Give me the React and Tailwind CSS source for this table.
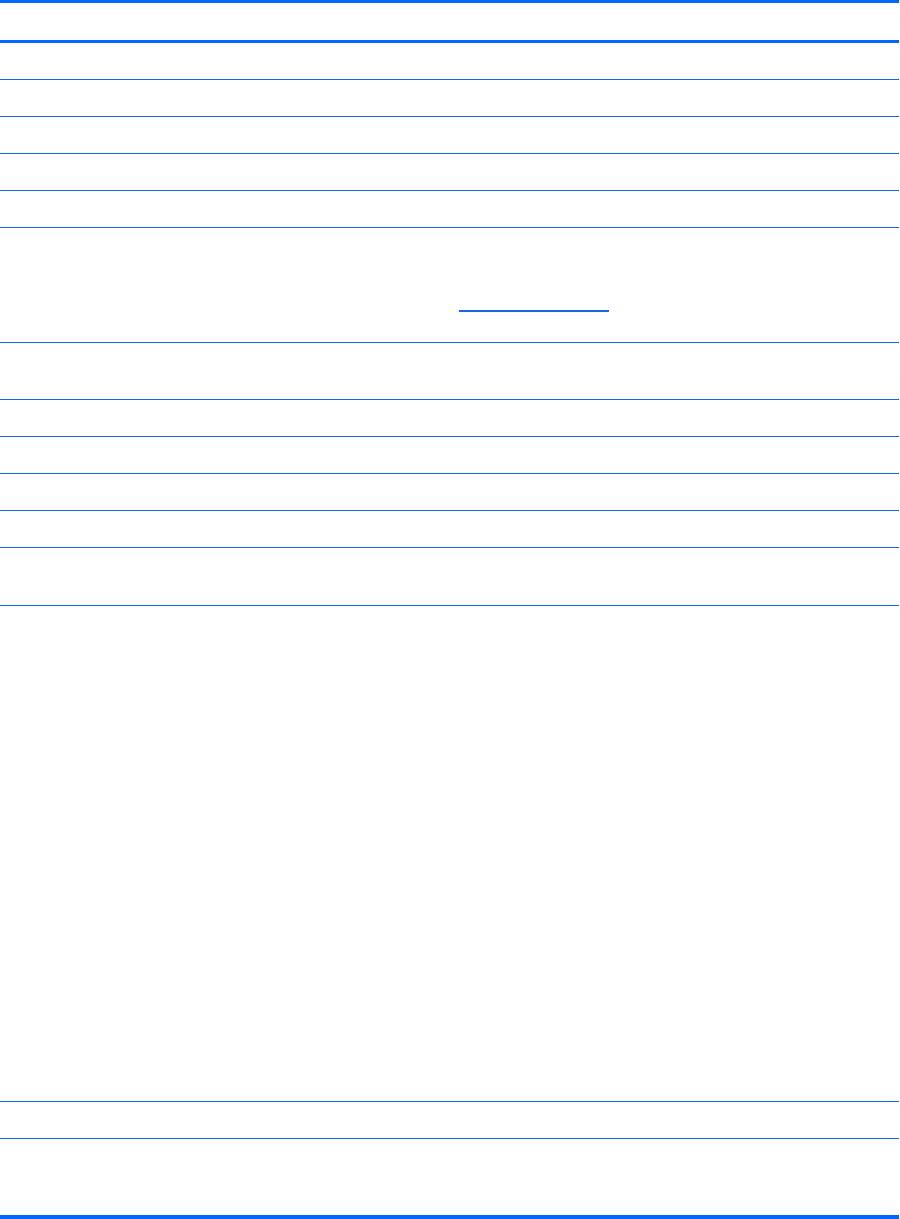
export default function App() {
  const rows = [37, 37, 37, 37, 37];
  const rows2 = [37, 37, 37, 37];
  return (
    <div className="w-[900px] h-[1219px] bg-white font-['Liberation_Sans',sans-serif]">
      <div className="w-[899px] flex flex-col">
        <div className="h-[43px] border-t-[3px] border-b-[3px] border-[#0066ff]" />
        {rows.map((h, i) => (
          <div key={i} className="h-[37px] border-b border-[#1565e8]" />
        ))}
        <div className="h-[115px] border-b border-[#1565e8] flex pl-[459px] pt-[82px]">
          <div className="w-[150px] h-[2px] bg-[#1a66e0]" />
        </div>
        <div className="h-[57px] border-b border-[#1565e8]" />
        {rows2.map((h, i) => (
          <div key={i} className="h-[37px] border-b border-[#1565e8]" />
        ))}
        <div className="h-[58px] border-b border-[#1565e8]" />
        <div className="h-[496px] border-b border-[#1565e8]" />
        <div className="h-[37px] border-b border-[#1565e8]" />
        <div className="h-[80px] border-b-4 border-[#0066ff]" />
      </div>
    </div>
  );
}
